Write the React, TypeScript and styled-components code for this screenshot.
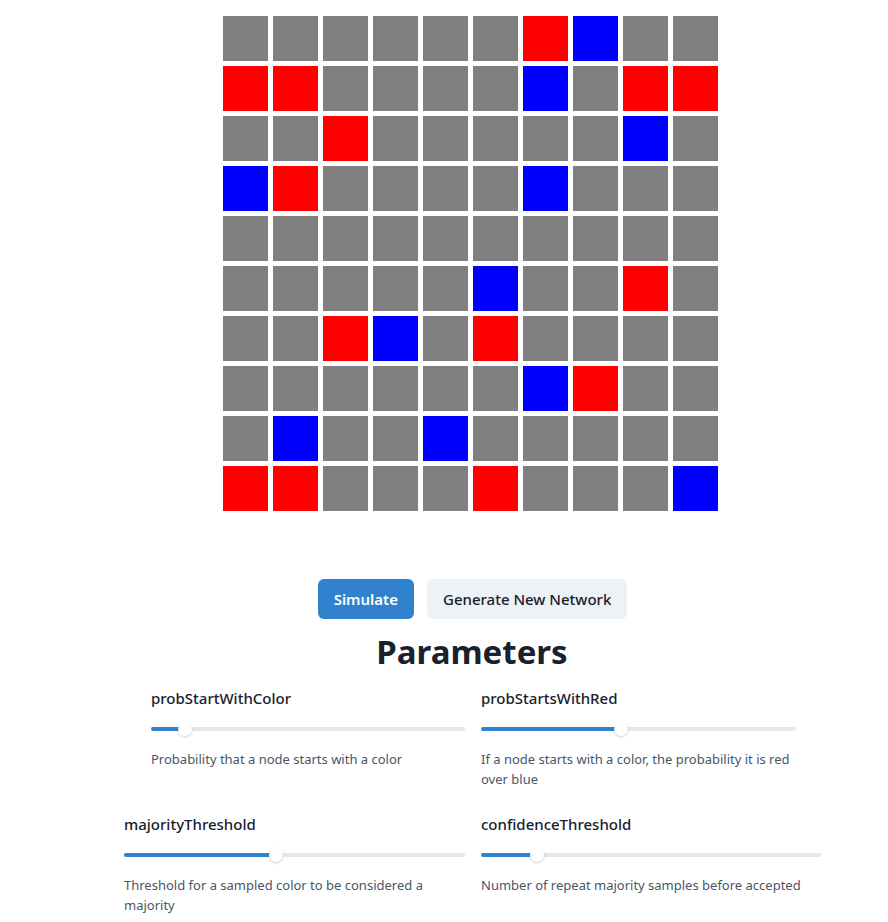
import styled, { createGlobalStyle } from 'styled-components';

type Cell = 'G' | 'R' | 'B';

const rows: string[] = [
  'GGGGGGRBGG',
  'RRGGGGBGRR',
  'GGRGGGGGBG',
  'BRGGGGBGGG',
  'GGGGGGGGGG',
  'GGGGGBGGRG',
  'GGRBGRGGGG',
  'GGGGGGBRGG',
  'GBGGBGGGGG',
  'RRGGGRGGGB',
];

const params = [
  {
    name: 'probStartWithColor',
    desc: 'Probability that a node starts with a color',
    value: 10.9,
    width: 314,
    side: 'left',
  },
  {
    name: 'probStartsWithRed',
    desc: 'If a node starts with a color, the probability it is red over blue',
    value: 44.4,
    width: 315,
    side: 'right',
  },
  {
    name: 'majorityThreshold',
    desc: 'Threshold for a sampled color to be considered a majority',
    value: 44.6,
    width: 341,
    side: 'left',
  },
  {
    name: 'confidenceThreshold',
    desc: 'Number of repeat majority samples before accepted',
    value: 16.5,
    width: 340,
    side: 'right',
  },
];

export default function App() {
  return (
    <>
      <GlobalStyle />
      <Main>
        <Network>
          {rows.map((row, r) =>
            row.split('').map((c, i) => <Node key={`${r}-${i}`} $color={c as Cell} />)
          )}
        </Network>
        <Actions>
          <Button $primary>Simulate</Button>
          <Button>Generate New Network</Button>
        </Actions>
        <Heading>Parameters</Heading>
        <ParamGrid>
          {params.map((p) => (
            <Param key={p.name} $width={p.width} $side={p.side}>
              <ParamLabel>{p.name}</ParamLabel>
              <Slider>
                <Track>
                  <Filled style={{ width: `${p.value}%` }} />
                </Track>
                <Thumb style={{ left: `${p.value}%` }} />
              </Slider>
              <ParamDesc>{p.desc}</ParamDesc>
            </Param>
          ))}
        </ParamGrid>
      </Main>
    </>
  );
}

const GlobalStyle = createGlobalStyle`
  body {
    margin: 0;
    background: #ffffff;
    font-family: "Noto Sans", "Open Sans", sans-serif;
    color: #1a202c;
  }
`;

const Main = styled.main`
  display: flex;
  flex-direction: column;
  align-items: center;
  padding-left: 56px;
  padding-top: 16px;
`;

const cellColors: Record<Cell, string> = {
  G: '#808080',
  R: '#ff0000',
  B: '#0000ff',
};

const Network = styled.div`
  display: grid;
  grid-template-columns: repeat(10, 45px);
  grid-auto-rows: 45px;
  gap: 5px;
  margin-right: 3px;
`;

const Node = styled.div<{ $color: Cell }>`
  background-color: ${(p) => cellColors[p.$color]};
`;

const Actions = styled.div`
  display: flex;
  gap: 13px;
  margin-top: 68px;
  margin-left: 1px;
`;

const Button = styled.button<{ $primary?: boolean }>`
  height: 40px;
  padding: 0 16px;
  border: none;
  border-radius: 6px;
  font-family: inherit;
  font-size: 15px;
  font-weight: ${(p) => (p.$primary ? 600 : 500)};
  cursor: pointer;
  background-color: ${(p) => (p.$primary ? '#3182ce' : '#edf2f7')};
  color: ${(p) => (p.$primary ? '#ffffff' : '#1a202c')};
`;

const Heading = styled.h2`
  margin: 11px 0 0;
  font-size: 33px;
  line-height: 43px;
  font-weight: 700;
  color: #1a202c;
`;

const ParamGrid = styled.div`
  display: grid;
  grid-template-columns: 1fr 1fr;
  column-gap: 16px;
  row-gap: 23px;
  width: 100%;
  margin-top: 13px;
  padding-left: 2px;
  box-sizing: border-box;
`;

const Param = styled.div<{ $width: number; $side: string }>`
  width: ${(p) => p.$width}px;
  justify-self: ${(p) => (p.$side === 'left' ? 'end' : 'start')};
`;

const ParamLabel = styled.div`
  font-size: 15px;
  line-height: 24px;
  font-weight: 500;
  color: #1a202c;
`;

const Slider = styled.div`
  position: relative;
  height: 16px;
  margin-top: 11px;
  display: flex;
  align-items: center;
`;

const Track = styled.div`
  position: relative;
  width: 100%;
  height: 4px;
  border-radius: 2px;
  background-color: #e2e8f0;
  overflow: hidden;
`;

const Filled = styled.div`
  height: 100%;
  background-color: #3182ce;
`;

const Thumb = styled.div`
  position: absolute;
  top: 1px;
  width: 14px;
  height: 14px;
  margin-left: -7px;
  border-radius: 50%;
  background: #ffffff;
  box-shadow: 0 1px 3px rgba(0, 0, 0, 0.12), 0 1px 2px rgba(0, 0, 0, 0.08);
`;

const ParamDesc = styled.p`
  margin: 13px 0 0;
  font-size: 13px;
  line-height: 19.5px;
  color: #4a5568;
`;
